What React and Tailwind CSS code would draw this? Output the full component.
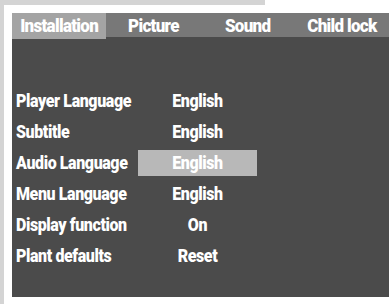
export default function App() {
  const rows = [
    ["Player Language", "English"],
    ["Subtitle", "English"],
    ["Audio Language", "English", true],
    ["Menu Language", "English"],
    ["Display function", "On"],
    ["Plant defaults", "Reset"],
  ];
  const tabs = ["Installation", "Picture", "Sound", "Child lock"];
  const font = { fontFamily: "Roboto, 'Liberation Sans', sans-serif" };
  return (
    <div className="w-[392px] h-[304px] bg-white flex overflow-hidden" style={font}>
      <div className="w-[4px] h-full bg-[#d4d4d4]" />
      <div className="flex flex-col">
        <div className="w-[261px] h-[5px] bg-[#d4d4d4]" />
        <div className="ml-[8px] mt-[8px] w-[377px] h-[284px] bg-[#4b4b4b] flex flex-col">
          <div className="grid grid-cols-4 h-[24px] bg-[#787878]">
            {tabs.map((t, i) => (
              <div
                key={t}
                className={`flex items-center justify-center whitespace-nowrap text-white font-black text-[17px] tracking-[-0.7px] ${i === 0 ? "bg-[#a4a4a4]" : ""}`}
              >
                <span className="inline-block scale-y-[1.12]">{t}</span>
              </div>
            ))}
          </div>
          <div className="pt-[48px] pl-[4px] flex flex-col">
            {rows.map(([l, v, hl]) => (
              <div key={l} className="h-[31px] flex items-center">
                <div className="w-[122px] whitespace-nowrap text-white font-black text-[16px] tracking-[-0.4px]">
                  <span className="inline-block scale-y-[1.12]">{l}</span>
                </div>
                <div
                  className={`w-[119px] h-[26px] flex items-center justify-center whitespace-nowrap text-white font-black text-[16px] tracking-[-0.4px] ${hl ? "bg-[#b8b8b8]" : ""}`}
                >
                  <span className="inline-block scale-y-[1.12]">{v}</span>
                </div>
              </div>
            ))}
          </div>
        </div>
      </div>
    </div>
  );
}
